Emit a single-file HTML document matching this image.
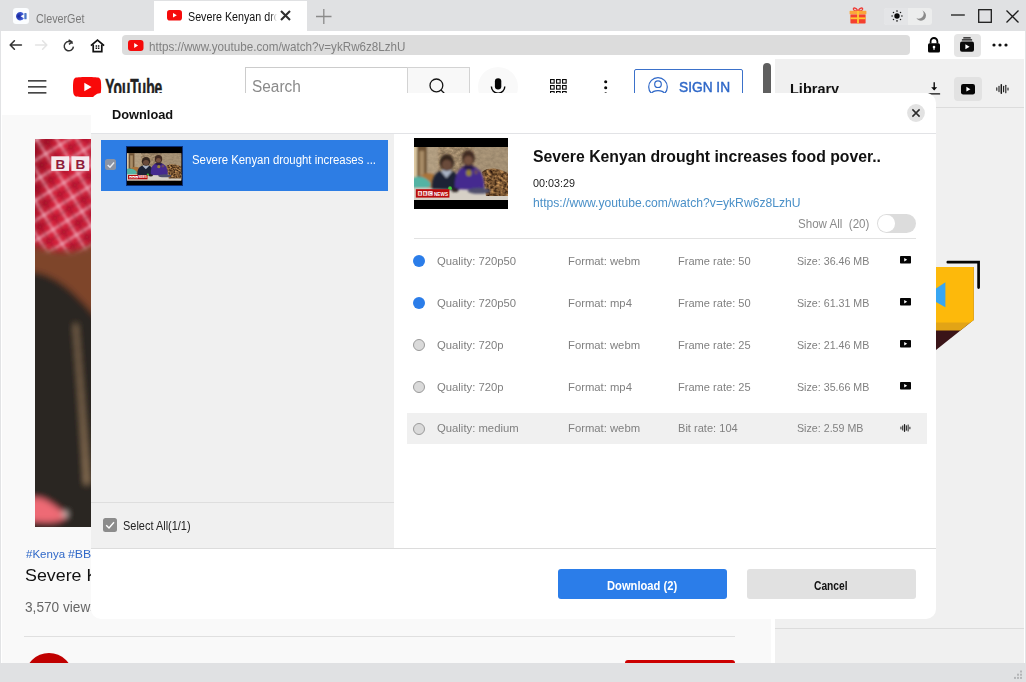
<!DOCTYPE html>
<html lang="en">
<head>
<meta charset="utf-8">
<title>CleverGet</title>
<style>
*{box-sizing:border-box;margin:0;padding:0}
html,body{width:1026px;height:682px;overflow:hidden;background:#fff}
body{position:relative;font-family:"Liberation Sans",sans-serif;color:#222;-webkit-font-smoothing:antialiased}
.abs{position:absolute}
.t{position:absolute;white-space:nowrap;line-height:1;transform-origin:0 0}
svg{position:absolute;overflow:visible}

/* window chrome */
#tabbar{left:0;top:0;width:1026px;height:31px;background:#e0e1e3}
#tab2{left:154px;top:1px;width:153px;height:30px;background:#fff}
#toolbar{left:0;top:31px;width:1026px;height:28px;background:#fff}
#urlbar{left:121.5px;top:35.4px;width:788.5px;height:19.7px;background:#dcdcdc;border-radius:4px}
#dlbtn{left:953.5px;top:33.5px;width:27px;height:23px;background:#e5e5e5;border-radius:4px}
#theme{left:883.5px;top:7.5px;width:48.5px;height:17px;background:#eceded;border-radius:3px}
#themeL{left:883.5px;top:7.5px;width:24.5px;height:17px;background:#e4e5e7;border-radius:3px 0 0 3px}

/* youtube page */
#ytpage{left:2px;top:59px;width:773px;height:604px;background:#f9f9f9;overflow:hidden}
#ythead{left:0;top:0;width:773px;height:56px;background:#fff}
#ytsearch{left:243px;top:8px;width:163px;height:40px;border:1px solid #ccc;border-right:none;background:#fff}
#ytsbtn{left:405px;top:8px;width:63px;height:40px;border:1px solid #d3d3d3;background:#f8f8f8}
#ytmic{left:475.5px;top:8px;width:40px;height:40px;border-radius:50%;background:#f9f9f9}
#signin{left:632px;top:10px;width:109px;height:37px;border:1px solid #3b71ca;border-radius:2px}
#ytscroll{left:768.7px;top:56px;width:4.3px;height:548px;background:#fff}
#ytthumb{left:761px;top:3.5px;width:8px;height:120px;background:#5f5f5f;border-radius:4px}
#video{left:33px;top:80px;width:700px;height:388px;background:#2a2524;overflow:hidden}

/* library panel */
#lib{left:775px;top:59px;width:249px;height:604px;background:#f0f0f0;overflow:hidden}
#libvid{left:179px;top:18px;width:28px;height:23.5px;background:#e2e2e2;border-radius:4px}

/* bottom status bar */
#status{left:0;top:663px;width:1026px;height:19px;background:#e0e1e3}

/* dialog */
#dlg{left:91px;top:93px;width:845px;height:525.6px;background:#fff;border-radius:10px;overflow:hidden}
#dleft{left:0;top:41px;width:302.7px;height:414px;background:#f0f0f0}
#item{left:10px;top:47px;width:287px;height:50.5px;background:#2d7de4}
.cb{width:13px;height:13px;background:#8c8c8c;border-radius:2.5px}
.row{left:316px;width:520px;height:31px}
.row .t{font-size:11.5px;color:#808080;top:10px}
.radio{position:absolute;left:6px;top:9.5px;width:12px;height:12px;border-radius:50%}
.radio.on{background:#2b7de9}
.radio.off{background:#dadada;border:1px solid #9a9a9a}
.btn{height:29.5px;border-radius:3px;top:476px}
/*FIT*/
#tx_tab1{transform:scaleX(0.8976)}
#tx_url{transform:scaleX(0.8953)}
#tx_search{transform:scaleX(0.9625)}
#tx_signin{transform:scaleX(0.9803)}
#tx_lib{transform:scaleX(0.9360)}
#tx_dtitle{transform:scaleX(0.9854)}
#tx_item{transform:scaleX(0.9478)}
#tx_selall{transform:scaleX(0.9129)}
#tx_title{transform:scaleX(1.0115)}
#tx_dur{transform:scaleX(0.9382)}
#tx_link{transform:scaleX(0.9340)}
#tx_showall{transform:scaleX(0.8902)}
#tx_dl{transform:scaleX(0.9319)}
#tx_cancel{transform:scaleX(0.8537)}
.row .q{transform:scaleX(0.9825)}
.row .f{transform:scaleX(0.9803)}
.row .r{transform:scaleX(0.9627)}
.row .s{transform:scaleX(0.9281)}
/*ENDFIT*/
#tx_tab2{transform:scaleX(.893)}
#tx_tags{transform:scaleX(1.047)}
#tx_tags2{transform:scaleX(1.119)}
#tx_vtitle{transform:scaleX(1.049)}
#tx_views{transform:scaleX(.976)}
</style>
</head>
<body>

<!-- ===== window chrome ===== -->
<div id="tabbar" class="abs"></div>
<div id="tab2" class="abs"></div>
<div id="toolbar" class="abs"></div>
<div id="urlbar" class="abs"></div>
<div id="dlbtn" class="abs"></div>
<div id="theme" class="abs"></div>
<div id="themeL" class="abs"></div>

<div class="t" id="tx_tab1" style="left:35.5px;top:12.5px;font-size:12px;color:#7a7a7a">CleverGet</div>
<div class="abs" style="left:187.6px;top:8px;width:89.4px;height:18px;overflow:hidden;-webkit-mask-image:linear-gradient(90deg,#000 92%,transparent 100%);mask-image:linear-gradient(90deg,#000 92%,transparent 100%)"><div class="t" id="tx_tab2" style="left:0;top:3.4px;font-size:12px;color:#111">Severe Kenyan drought increases food poverty</div></div>
<div class="t" id="tx_url" style="left:148.8px;top:40.2px;font-size:13px;color:#808080">https://www.youtube.com/watch?v=ykRw6z8LzhU</div>


<!-- chrome icons -->
<svg id="ic_cg" style="left:13px;top:8px" width="16" height="16" viewBox="0 0 16 16">
  <rect x="0" y="0" width="16" height="16" rx="3.2" fill="#fbfdff"/>
  <defs><radialGradient id="cgg" cx="0.35" cy="0.5" r="0.7"><stop offset="0" stop-color="#16229a"/><stop offset="1" stop-color="#4e6fe6"/></radialGradient></defs>
  <path d="M10.9 6.2 A4.2 4.2 0 1 0 10.9 10.2 L7.6 8.2 Z" fill="url(#cgg)"/>
  <rect x="11.3" y="5.1" width="2.3" height="6.2" rx="0.6" fill="#4d78c6"/>
</svg>
<svg id="ic_yt1" style="left:166.5px;top:9.5px" width="15" height="10.6" viewBox="0 0 15 10.6"><rect width="15" height="10.6" rx="2.8" fill="#f60b0b"/><path d="M6 3 L9.8 5.3 L6 7.6 Z" fill="#fff"/></svg>
<svg id="ic_close1" style="left:280.1px;top:10.2px" width="11" height="11" viewBox="0 0 11 11"><path d="M1 1 L10 10 M10 1 L1 10" stroke="#2e2e2e" stroke-width="2.1" fill="none"/></svg>
<svg id="ic_plus" style="left:315.5px;top:8.5px" width="16" height="15" viewBox="0 0 16 15"><path d="M0 7.5 H15.5 M7.8 0 V15" stroke="#8a8a8a" stroke-width="1.3" fill="none"/></svg>
<svg id="ic_gift" style="left:849px;top:5.8px" width="18" height="18" viewBox="0 0 18 18">
  <path d="M9 5 C7 0.8 3.4 1.6 4.6 3.8 C5.4 5 7.6 5 9 5 C10.4 5 12.6 5 13.4 3.8 C14.6 1.6 11 0.8 9 5 Z" fill="none" stroke="#ef3b36" stroke-width="1.3"/>
  <rect x="0.6" y="4.8" width="16.8" height="3.6" rx="0.6" fill="#fba63a"/>
  <rect x="1.4" y="8.4" width="15.2" height="9" rx="0.6" fill="#f4402f"/>
  <rect x="1.4" y="11.4" width="15.2" height="1.8" fill="#ffc933"/>
  <rect x="8.1" y="4.8" width="1.8" height="12.6" fill="#ffc933"/>
</svg>
<svg id="ic_sun" style="left:890.5px;top:10px" width="12" height="12" viewBox="-6 -6 12 12">
  <circle r="2.7" fill="#0a0a0a"/>
  <g fill="#1a1a1a"><circle cx="0" cy="-4.9" r="0.8"/><circle cx="0" cy="4.9" r="0.8"/><circle cx="-4.9" cy="0" r="0.8"/><circle cx="4.9" cy="0" r="0.8"/><circle cx="3.5" cy="3.5" r="0.75"/><circle cx="-3.5" cy="3.5" r="0.75"/><circle cx="3.5" cy="-3.5" r="0.75"/><circle cx="-3.5" cy="-3.5" r="0.75"/></g>
</svg>
<svg id="ic_moon" style="left:914px;top:9px" width="14" height="14" viewBox="0 0 14 14"><defs><mask id="mm"><rect width="14" height="14" fill="#fff"/><circle cx="4.6" cy="4.6" r="5.1" fill="#000"/></mask></defs><circle cx="6.9" cy="6.6" r="5.1" fill="#8a8a8a" mask="url(#mm)"/></svg>
<svg id="ic_min" style="left:951px;top:14px" width="14" height="2" viewBox="0 0 14 2"><rect width="13.8" height="1.3" y="0.35" fill="#1c1c1c"/></svg>
<svg id="ic_max" style="left:978px;top:9px" width="14" height="14" viewBox="0 0 14 14"><rect x="0.7" y="0.7" width="12.6" height="12.6" fill="none" stroke="#1c1c1c" stroke-width="1.3"/></svg>
<svg id="ic_x" style="left:1006px;top:9.5px" width="13" height="13" viewBox="0 0 13 13"><path d="M0.5 0.5 L12.5 12.5 M12.5 0.5 L0.5 12.5" stroke="#1c1c1c" stroke-width="1.3" fill="none"/></svg>

<svg id="ic_back" style="left:8.9px;top:40.4px" width="13" height="10" viewBox="0 0 13 10"><path d="M12.4 5 H1.4 M5.4 0.8 L1.2 5 L5.4 9.2" stroke="#333" stroke-width="1.6" fill="none" stroke-linecap="round" stroke-linejoin="round"/></svg>
<svg id="ic_fwd" style="left:34.5px;top:40px" width="13" height="10" viewBox="0 0 13 10"><path d="M0.6 5 H11.6 M7.6 0.8 L11.8 5 L7.6 9.2" stroke="#e4e4e4" stroke-width="1.6" fill="none" stroke-linecap="round" stroke-linejoin="round"/></svg>
<svg id="ic_reload" style="left:63px;top:38.5px" width="12" height="13" viewBox="0 0 12 13"><path d="M9.6 4.6 A4.6 4.6 0 1 0 10.4 7.6" stroke="#333" stroke-width="1.5" fill="none"/><path d="M5.6 0.8 L9 3 L6 5.4" stroke="#333" stroke-width="1.5" fill="none" stroke-linejoin="round"/></svg>
<svg id="ic_home" style="left:89.5px;top:38.5px" width="15" height="14" viewBox="0 0 15 14"><path d="M0.9 6.6 L7.5 1 L14.1 6.6" stroke="#111" stroke-width="1.7" fill="none" stroke-linejoin="miter"/><path d="M3.2 5.6 V12.6 H11.8 V5.6" stroke="#111" stroke-width="1.7" fill="none"/><path d="M5.6 6.2 h1.5 v1.5 h-1.5z M7.9 6.2 h1.5 v1.5 h-1.5z M5.6 8.5 h1.5 v1.5 h-1.5z M7.9 8.5 h1.5 v1.5 h-1.5z" fill="#111"/></svg>
<svg id="ic_yt2" style="left:128px;top:39.5px" width="15.5" height="11" viewBox="0 0 15.5 11"><rect width="15.5" height="11" rx="2.9" fill="#f60b0b"/><path d="M6.2 3.1 L10.1 5.5 L6.2 7.9 Z" fill="#fff"/></svg>
<svg id="ic_lock" style="left:928px;top:37px" width="12" height="16" viewBox="0 0 12 16"><path d="M2.6 6.6 V4.4 A3.4 3.4 0 0 1 9.4 4.4 V6.6" stroke="#050505" stroke-width="1.8" fill="none"/><rect x="0" y="6.2" width="12" height="9.4" rx="1.6" fill="#050505"/><circle cx="6" cy="10" r="1.3" fill="#fff"/><rect x="5.4" y="10" width="1.2" height="2.8" fill="#fff"/></svg>
<svg id="ic_dlm" style="left:960px;top:37px" width="14" height="15" viewBox="0 0 14 15"><rect x="3.2" y="0.2" width="7.6" height="1.2" rx="0.5" fill="#111"/><rect x="1.8" y="2.3" width="10.4" height="1.3" rx="0.5" fill="#111"/><rect x="0" y="4.6" width="14" height="10.2" rx="2" fill="#0a0a0a"/><path d="M5.4 7.2 L9.6 9.7 L5.4 12.2 Z" fill="#fff"/></svg>
<svg id="ic_dots" style="left:992px;top:43px" width="16" height="4" viewBox="0 0 16 4"><circle cx="2" cy="2" r="1.6" fill="#111"/><circle cx="8" cy="2" r="1.6" fill="#111"/><circle cx="14" cy="2" r="1.6" fill="#111"/></svg>

<!-- ===== youtube page ===== -->
<div id="ytpage" class="abs">
  <div id="ythead" class="abs"></div>
  <div id="ytsearch" class="abs"></div>
  <div id="ytsbtn" class="abs"></div>
  <div id="ytmic" class="abs"></div>
  <div id="signin" class="abs"></div>

  <svg id="ic_burger" style="left:26px;top:20.5px" width="19" height="14" viewBox="0 0 19 14"><path d="M0 0.9 H18.4 M0 6.9 H18.4 M0 12.9 H18.4" stroke="#0a0a0a" stroke-width="1.2" fill="none"/></svg>
  <svg id="ic_ytlogo" style="left:71px;top:18px" width="92" height="20" viewBox="0 0 92 20">
    <path d="M27.6 3.1 C27.3 1.9 26.3 0.9 25.1 0.6 C22.9 0 14.1 0 14.1 0 C14.1 0 5.3 0 3.1 0.6 C1.9 0.9 0.9 1.9 0.6 3.1 C0 5.3 0 10 0 10 C0 10 0 14.7 0.6 16.9 C0.9 18.1 1.9 19.1 3.1 19.4 C5.3 20 14.1 20 14.1 20 C14.1 20 22.9 20 25.1 19.4 C26.3 19.1 27.3 18.1 27.6 16.9 C28.2 14.7 28.2 10 28.2 10 C28.2 10 28.2 5.3 27.6 3.1 Z" fill="#f90909"/>
    <path d="M11.3 14.3 L18.6 10 L11.3 5.7 Z" fill="#fff"/>
    <text x="32.3" y="18.6" font-family="Liberation Sans, sans-serif" font-weight="bold" font-size="24" fill="#212121" stroke="#212121" stroke-width="0.5" textLength="57" lengthAdjust="spacingAndGlyphs">YouTube</text>
  </svg>
  <svg id="ic_search" style="left:426.5px;top:18.5px" width="18" height="18" viewBox="0 0 18 18"><circle cx="7.4" cy="7.4" r="6.4" stroke="#151515" stroke-width="1.3" fill="none"/><path d="M12 12 L17.4 17.4" stroke="#151515" stroke-width="1.3"/></svg>
  <svg id="ic_mic" style="left:488px;top:18.5px" width="16" height="20" viewBox="0 0 16 20"><rect x="4.9" y="0.3" width="6.4" height="11.2" rx="3.2" fill="#050505"/><path d="M1.4 8.6 A6.7 6.7 0 0 0 14.8 8.6" stroke="#050505" stroke-width="1.4" fill="none"/><path d="M8.1 15.3 V19" stroke="#050505" stroke-width="1.4"/></svg>
  <svg id="ic_grid" style="left:548px;top:20px" width="17" height="17" viewBox="0 0 17 17"><g fill="none" stroke="#0a0a0a" stroke-width="1.1"><rect x="0.55" y="0.55" width="3.6" height="3.6"/><rect x="6.55" y="0.55" width="3.6" height="3.6"/><rect x="12.55" y="0.55" width="3.6" height="3.6"/><rect x="0.55" y="6.55" width="3.6" height="3.6"/><rect x="6.55" y="6.55" width="3.6" height="3.6"/><rect x="12.55" y="6.55" width="3.6" height="3.6"/><rect x="0.55" y="12.55" width="3.6" height="3.6"/><rect x="6.55" y="12.55" width="3.6" height="3.6"/><rect x="12.55" y="12.55" width="3.6" height="3.6"/></g></svg>
  <svg id="ic_vdots" style="left:602.4px;top:20.6px" width="4" height="16" viewBox="0 0 4 16"><circle cx="1.7" cy="1.7" r="1.55" fill="#0a0a0a"/><circle cx="1.7" cy="7.7" r="1.55" fill="#0a0a0a"/><circle cx="1.7" cy="13.7" r="1.55" fill="#0a0a0a"/></svg>
  <svg id="ic_user" style="left:646px;top:18px" width="20" height="20" viewBox="0 0 20 20"><circle cx="10" cy="10" r="9.3" stroke="#2f68c8" stroke-width="1.2" fill="none"/><circle cx="10" cy="7.2" r="3.3" stroke="#2f68c8" stroke-width="1.2" fill="none"/><path d="M3.4 16.4 C5.4 12.6 14.6 12.6 16.6 16.4" stroke="#2f68c8" stroke-width="1.2" fill="none"/></svg>
  <div class="t" id="tx_search" style="left:250px;top:19.9px;font-size:16px;color:#8a8a8a">Search</div>
  <div class="t" id="tx_signin" style="left:677px;top:20.5px;font-size:14px;color:#2f68c8;letter-spacing:0;-webkit-text-stroke:0.45px #2f68c8">SIGN IN</div>
  <div id="video" class="abs">
    <svg style="left:0;top:0" width="60" height="388" viewBox="0 0 60 388">
      <defs>
        <filter id="b3" x="-20%" y="-5%" width="140%" height="110%"><feGaussianBlur stdDeviation="3"/></filter>
        <filter id="b2" x="-20%" y="-5%" width="140%" height="110%"><feGaussianBlur stdDeviation="1.6"/></filter>
        <linearGradient id="redg" x1="0" y1="0" x2="1" y2="0.3"><stop offset="0" stop-color="#9c1226"/><stop offset="0.45" stop-color="#d4203a"/><stop offset="1" stop-color="#c61e38"/></linearGradient>
        <pattern id="plaid" width="17" height="17" patternUnits="userSpaceOnUse" patternTransform="rotate(-32)"><rect width="17" height="17" fill="none"/><rect width="17" height="2.6" fill="#f3b4c2" opacity=".75"/><rect width="2.6" height="17" fill="#f5c0cc" opacity=".65"/><rect y="8.5" width="17" height="1.4" fill="#7a0c1e" opacity=".55"/><rect x="8.5" width="1.4" height="17" fill="#7a0c1e" opacity=".55"/></pattern>
      </defs>
      <rect width="60" height="388" fill="#2a2524"/>
      <rect width="60" height="130" fill="url(#redg)"/>
      <g filter="url(#b2)"><rect x="-6" y="-6" width="72" height="130" fill="url(#plaid)"/></g>
      <g filter="url(#b3)">
        <path d="M-8 104 C16 114 40 118 68 100 V190 C44 160 28 140 -8 136 Z" fill="#7e4529"/>
        <path d="M-8 132 C24 134 44 158 68 186 V396 H-8 Z" fill="#2a2524"/>
        <path d="M41.5 185 C46 240 50 290 53.5 345 H50 C47.5 290 44 240 39.5 185 Z" fill="#b08f6a"/>
        <path d="M-6 360 C8 354 20 368 32 376 C28 384 14 384 -6 382 Z" fill="#ee6a74"/>
        <circle cx="30" cy="375" r="2.6" fill="#e8dcd6"/>
      </g>
      <rect x="16.3" y="17.3" width="17.8" height="14.6" fill="#f5eaee"/><rect x="36.4" y="17.3" width="17.8" height="14.6" fill="#f5eaee"/><rect x="56.4" y="17.3" width="17" height="14.6" fill="#f5eaee"/>
      <text x="20.4" y="29.6" font-family="Liberation Sans, sans-serif" font-weight="bold" font-size="13.5" fill="#8e1a3a">B</text>
      <text x="40.5" y="29.6" font-family="Liberation Sans, sans-serif" font-weight="bold" font-size="13.5" fill="#8e1a3a">B</text>
    </svg>
  </div>
  <div class="abs" id="ytclip" style="left:20px;top:480px;width:68.6px;height:90px;overflow:hidden">
  <div class="t" id="tx_tags" style="left:3.5px;top:10.3px;font-size:11px;color:#2f68c8">#Kenya</div>
  <div class="t" id="tx_tags2" style="left:46px;top:10.3px;font-size:11px;color:#2f68c8">#BBCNews #BBCAfrica</div>
  <div class="t" id="tx_vtitle" style="left:3px;top:27.6px;font-size:17px;color:#111">Severe Kenyan drought increases food poverty - BBC News</div>
  <div class="t" id="tx_views" style="left:3px;top:61.3px;font-size:14px;color:#666">3,570 views</div>
  </div>
  <div class="abs" style="left:22px;top:577px;width:711px;height:1px;background:#e0e0e0"></div>
  <div class="abs" style="left:22.5px;top:594px;width:48px;height:48px;border-radius:50%;background:#c00000"></div>
  <div class="abs" style="left:623px;top:601px;width:110px;height:37px;border-radius:3px;background:#cc0000"></div>
  <div id="ytscroll" class="abs"></div>
  <div id="ytthumb" class="abs"></div>
</div>

<!-- ===== library panel ===== -->
<div id="lib" class="abs">
  <div class="t" id="tx_lib" style="left:15px;top:22px;font-size:15.5px;font-weight:bold;color:#111">Library</div>
  <div id="libvid" class="abs"></div>

  <svg id="ic_ldl" style="left:153px;top:23px" width="13" height="13" viewBox="0 0 13 13"><path d="M6.2 0.2 V7.6" stroke="#0a0a0a" stroke-width="1.4"/><path d="M3.2 5.2 L6.2 8.6 L9.2 5.2 Z" fill="#0a0a0a"/><rect x="0.4" y="11.2" width="11.8" height="1.3" rx="0.6" fill="#0a0a0a"/></svg>
  <svg id="ic_lvid" style="left:186px;top:25px" width="14" height="10.4" viewBox="0 0 14 10.4"><rect width="14" height="10.4" rx="2.2" fill="#050505"/><path d="M5.4 2.8 L9.4 5.2 L5.4 7.6 Z" fill="#fff"/></svg>
  <svg id="ic_laud" style="left:220.5px;top:25px" width="13" height="10" viewBox="0 0 13 10"><g stroke="#1a1a1a" stroke-width="1.1" stroke-linecap="round" fill="none"><path d="M0.8 3.8 V6.2"/><path d="M3 2.4 V7.6"/><path d="M5.3 0.8 V9.2" stroke-width="1.5"/><path d="M7.6 2.2 V7.8"/><path d="M9.8 1.2 V8.8"/><path d="M12 4 V6" /></g></svg>
  <svg id="ic_box" style="left:161px;top:200px" width="46" height="92" viewBox="0 0 46 92">
    <path d="M11.8 3.2 H42.6 V28.6" stroke="#050505" stroke-width="2.7" fill="none" stroke-linecap="round" stroke-linejoin="miter"/>
    <path d="M0 8 H37.6 V61 L0 91 Z" fill="#3a1418"/>
    <path d="M0 8 H37.6 V61 L24.4 71.6 H0 Z" fill="#e2a416"/>
    <path d="M0 8 H37.6 V61 L34.4 63.6 H0 Z" fill="#fdb90b"/>
    <path d="M0 29.4 L9.4 23.3 V48.3 L0 43 Z" fill="#38a6f2"/>
  </svg>
  <div class="abs" style="left:0;top:47.5px;width:249px;height:1px;background:#dcdcdc"></div>
  <div class="abs" style="left:0;top:568.5px;width:249px;height:1px;background:#dcdcdc"></div>
</div>

<div id="status" class="abs"></div>
<div class="abs" style="left:0;top:31px;width:1.4px;height:632px;background:#e2e3e5"></div>
<div class="abs" style="left:1024.5px;top:31px;width:1.5px;height:632px;background:#e2e3e5"></div>
<svg id="ic_grip" style="left:1012px;top:670px" width="11" height="10" viewBox="0 0 11 10"><g fill="#b4b5b7"><rect x="8" y="0.5" width="2" height="2"/><rect x="5" y="3.7" width="2" height="2"/><rect x="8" y="3.7" width="2" height="2"/><rect x="2" y="6.9" width="2" height="2"/><rect x="5" y="6.9" width="2" height="2"/><rect x="8" y="6.9" width="2" height="2"/></g></svg>


<svg width="0" height="0" style="left:0;top:0">
  <defs>
    <filter id="tb" x="-10%" y="-10%" width="120%" height="120%"><feGaussianBlur stdDeviation="1"/></filter>
    <filter id="tb2" x="-10%" y="-10%" width="120%" height="120%"><feGaussianBlur stdDeviation="0.5"/></filter>
    <filter id="wallf" x="0" y="0" width="100%" height="100%" color-interpolation-filters="sRGB">
      <feTurbulence type="fractalNoise" baseFrequency="0.22 0.3" numOctaves="3" seed="7" result="n"/>
      <feColorMatrix in="n" type="matrix" values="0.4 0 0 0 0.42  0.36 0 0 0 0.35  0.3 0 0 0 0.26  0 0 0 0 1"/>
    </filter>
    <filter id="clothf" x="0" y="0" width="100%" height="100%" color-interpolation-filters="sRGB">
      <feTurbulence type="fractalNoise" baseFrequency="0.3 0.34" numOctaves="2" seed="3" result="n"/>
      <feColorMatrix in="n" type="matrix" values="1.0 0 0 0 -0.02  0.8 0 0 0 -0.06  0.5 0 0 0 -0.05  0 0 0 0 1" result="c"/>
      <feComposite in="c" in2="SourceGraphic" operator="in"/>
    </filter>
    <symbol id="thumb" viewBox="0 0 94 71">
      <rect width="94" height="71" fill="#000"/>
      <svg x="0" y="9" width="94" height="53" viewBox="0 9 94 53" style="overflow:hidden;position:static">
      <rect x="0" y="9" width="94" height="53" fill="#a08c74"/>
      <rect x="0" y="9" width="94" height="53" filter="url(#wallf)" opacity=".85"/>
      <g filter="url(#tb)">
        <rect x="-2" y="7" width="5" height="36" fill="#dcc8a2"/>
        <rect x="3" y="7" width="10" height="33" fill="#6e5236"/>
        <rect x="5.5" y="13" width="4.5" height="25" fill="#a88c66"/>
        <rect x="13" y="7" width="11" height="30" fill="#b9a68a" opacity=".7"/>
        <rect x="60" y="7" width="36" height="26" fill="#a7947c" opacity=".6"/>
        <path d="M7 38 C12 33 22 34 23 42 V52 H7 Z" fill="#a9733a"/>
        <path d="M-2 40 C5 36 14 40 17 46 C17 50 10 52 -2 51 Z" fill="#52b3a4"/>
        <path d="M-2 50 H96 V64 H-2 Z" fill="#d6d0c6"/>
      </g>
      <g filter="url(#tb2)"><path d="M68 34 C74 28 88 30 96 37 V58 H72 Z" fill="#8a5e30" filter="url(#clothf)"/></g>
      <g filter="url(#tb)">
        <path d="M18 51 C17 41 21 34 27 33 L32.5 35 L38 33 C44 35 46 42 45 52 Z" fill="#1c2235"/>
        <path d="M27 33.5 L32.5 40 L38 33.5 L35.5 31.5 H29.5 Z" fill="#a9b2c4"/>
        <ellipse cx="32.8" cy="24.6" rx="7.2" ry="8.4" fill="#35261f"/>
        <ellipse cx="32.8" cy="27" rx="5" ry="5.2" fill="#6b4c3b"/>
        <path d="M41 51 C40 40 43 31 50 29 H60 C67 31 71 40 70 52 Z" fill="#44298f"/>
        <path d="M48 30 L55 33 L61 30 L58 27 H51 Z" fill="#2a1c4a"/>
        <ellipse cx="54.3" cy="20" rx="6.4" ry="7.8" fill="#3f2a20"/>
        <ellipse cx="54.3" cy="22.5" rx="4.4" ry="4.6" fill="#76533f"/>
        <ellipse cx="54.8" cy="35" rx="2.8" ry="3.2" fill="#958338"/>
        <ellipse cx="62" cy="34" rx="2.2" ry="2.6" fill="#6a4860"/>
        <ellipse cx="65" cy="52.8" rx="11.5" ry="3" fill="#50506c"/>
        <ellipse cx="41" cy="52" rx="3.4" ry="2.2" fill="#2a2420"/>
      </g>
      <circle cx="36" cy="50.2" r="1.9" fill="#3fc63c" filter="url(#tb2)"/>
      <rect x="1.8" y="51.2" width="33.6" height="8.4" fill="#b90a0c"/>
      <g fill="#fff"><rect x="3.8" y="53.2" width="4.4" height="4.4"/><rect x="9" y="53.2" width="4.4" height="4.4"/><rect x="14.2" y="53.2" width="4.4" height="4.4"/></g>
      <text x="20" y="57.5" font-family="Liberation Sans, sans-serif" font-weight="bold" font-size="5.2" fill="#fff" textLength="14" lengthAdjust="spacingAndGlyphs">NEWS</text>
      <g font-family="Liberation Sans, sans-serif" font-weight="bold" font-size="4.4" fill="#b90a0c"><text x="4.4" y="57">B</text><text x="9.6" y="57">B</text><text x="14.8" y="57">C</text></g>
      </svg>
    </symbol>
  </defs>
</svg>

<!-- ===== dialog ===== -->
<div id="dlg" class="abs">
  <div class="t" id="tx_dtitle" style="left:21px;top:15px;font-size:13px;font-weight:bold;color:#111">Download</div>
  <div class="abs" style="left:0;top:40px;width:845px;height:1px;background:#e2e3e6"></div>
  <div id="dleft" class="abs"></div>
  <div id="item" class="abs"></div>
  <div class="cb abs" style="left:13.7px;top:65.5px;width:11.6px;height:11.8px;background:#8b93a3"></div>

  <svg id="ic_dclose" style="left:816px;top:11px" width="18" height="18" viewBox="0 0 18 18"><circle cx="9" cy="9" r="8.9" fill="#e2e2e2"/><path d="M5.4 5.4 L12.6 12.6 M12.6 5.4 L5.4 12.6" stroke="#2a2a2a" stroke-width="1.5" fill="none"/></svg>
  <div class="abs" style="left:35px;top:53px;width:56.5px;height:39.5px;background:#000;border:1px solid #0b2f78"></div>
  <svg id="ic_thumb1" style="left:36px;top:54px;overflow:hidden" width="54.5" height="37.5" viewBox="0 -2.3 94 73.1" preserveAspectRatio="none"><use href="#thumb"/></svg>
  <svg id="ic_chk1" style="left:13.7px;top:65.5px" width="11.6" height="11.8" viewBox="0 0 13 13"><path d="M3 6.6 L5.6 9.2 L10.2 3.8" stroke="#e9edf5" stroke-width="1.5" fill="none"/></svg>
  <svg id="ic_thumb2" style="left:323px;top:45px" width="94" height="71" viewBox="0 0 94 71"><use href="#thumb"/></svg>
  <div class="t" id="tx_item" style="left:100.5px;top:60.8px;font-size:12px;color:#fff">Severe Kenyan drought increases ...</div>
  <div class="abs" style="left:0;top:409px;width:303px;height:1px;background:#dedede"></div>
  <div class="cb abs" style="left:11.5px;top:425px;width:14px;height:14px"></div>
  <svg id="ic_chk2" style="left:11.5px;top:425px" width="14" height="14" viewBox="0 0 14 14"><path d="M3.2 7.2 L6 10 L11 4.2" stroke="#fff" stroke-width="1.4" fill="none"/></svg>
  <div class="t" id="tx_selall" style="left:31.5px;top:427.3px;font-size:12px;color:#222">Select All(1/1)</div>
  <div class="abs" style="left:0;top:454.5px;width:845px;height:1px;background:#dcdcdc"></div>

  <div class="t" id="tx_title" style="left:442px;top:56px;font-size:15.6px;font-weight:bold;color:#111">Severe Kenyan drought increases food pover..</div>
  <div class="t" id="tx_dur" style="left:442px;top:84.5px;font-size:11.5px;color:#222">00:03:29</div>
  <div class="t" id="tx_link" style="left:442px;top:103px;font-size:13px;color:#4a90c8">https://www.youtube.com/watch?v=ykRw6z8LzhU</div>
  <div class="t" id="tx_showall" style="left:707px;top:124px;font-size:13px;color:#8a8a8a">Show All&nbsp; (20)</div>
  <div class="abs" style="left:785.5px;top:120.5px;width:39px;height:19.5px;border-radius:10px;background:#dcdcdc"></div>
  <div class="abs" style="left:787px;top:122px;width:16.5px;height:16.5px;border-radius:50%;background:#fff"></div>
  <div class="abs" style="left:323px;top:145px;width:502px;height:1px;background:#e2e2e2"></div>

  <div class="row abs" style="top:152.5px"><div class="radio on"></div><div class="t q" style="left:30px">Quality: 720p50</div><div class="t f" style="left:160.5px">Format: webm</div><div class="t r" style="left:270.5px">Frame rate: 50</div><div class="t s" style="left:390px">Size: 36.46 MB</div><svg class="ri" style="left:493px;top:10.7px" width="11" height="7.5" viewBox="0 0 11 7.5"><rect width="11" height="7.5" rx="0.8" fill="#050505"/><path d="M4.2 2 L7.2 3.75 L4.2 5.5 Z" fill="#fff"/></svg></div>
  <div class="row abs" style="top:194.5px"><div class="radio on"></div><div class="t q" style="left:30px">Quality: 720p50</div><div class="t f" style="left:160.5px">Format: mp4</div><div class="t r" style="left:270.5px">Frame rate: 50</div><div class="t s" style="left:390px">Size: 61.31 MB</div><svg class="ri" style="left:493px;top:10.7px" width="11" height="7.5" viewBox="0 0 11 7.5"><rect width="11" height="7.5" rx="0.8" fill="#050505"/><path d="M4.2 2 L7.2 3.75 L4.2 5.5 Z" fill="#fff"/></svg></div>
  <div class="row abs" style="top:236.5px"><div class="radio off"></div><div class="t q" style="left:30px">Quality: 720p</div><div class="t f" style="left:160.5px">Format: webm</div><div class="t r" style="left:270.5px">Frame rate: 25</div><div class="t s" style="left:390px">Size: 21.46 MB</div><svg class="ri" style="left:493px;top:10.7px" width="11" height="7.5" viewBox="0 0 11 7.5"><rect width="11" height="7.5" rx="0.8" fill="#050505"/><path d="M4.2 2 L7.2 3.75 L4.2 5.5 Z" fill="#fff"/></svg></div>
  <div class="row abs" style="top:278.5px"><div class="radio off"></div><div class="t q" style="left:30px">Quality: 720p</div><div class="t f" style="left:160.5px">Format: mp4</div><div class="t r" style="left:270.5px">Frame rate: 25</div><div class="t s" style="left:390px">Size: 35.66 MB</div><svg class="ri" style="left:493px;top:10.7px" width="11" height="7.5" viewBox="0 0 11 7.5"><rect width="11" height="7.5" rx="0.8" fill="#050505"/><path d="M4.2 2 L7.2 3.75 L4.2 5.5 Z" fill="#fff"/></svg></div>
  <div class="row abs" style="top:320px;background:#f0f0f0"><div class="radio off"></div><div class="t q" style="left:30px">Quality: medium</div><div class="t f" style="left:160.5px">Format: webm</div><div class="t r" style="left:270.5px">Bit rate: 104</div><div class="t s" style="left:390px">Size: 2.59 MB</div><svg class="ri" style="left:492.5px;top:10.7px" width="11" height="8" viewBox="0 0 13 10"><g stroke="#1a1a1a" stroke-width="1.2" stroke-linecap="round" fill="none"><path d="M0.8 3.8 V6.2"/><path d="M3 2.4 V7.6"/><path d="M5.3 0.8 V9.2" stroke-width="1.6"/><path d="M7.6 2.2 V7.8"/><path d="M9.8 1.2 V8.8"/><path d="M12 4 V6"/></g></svg></div>

  <div class="btn abs" style="left:467px;width:169px;background:#2b7de9"></div>
  <div class="btn abs" style="left:656px;width:169px;background:#e1e1e1"></div>
  <div class="t" id="tx_dl" style="left:516px;top:487px;font-size:12px;font-weight:bold;color:#fff">Download (2)</div>
  <div class="t" id="tx_cancel" style="left:722.5px;top:487px;font-size:12px;font-weight:bold;color:#111">Cancel</div>
</div>

</body>
</html>
